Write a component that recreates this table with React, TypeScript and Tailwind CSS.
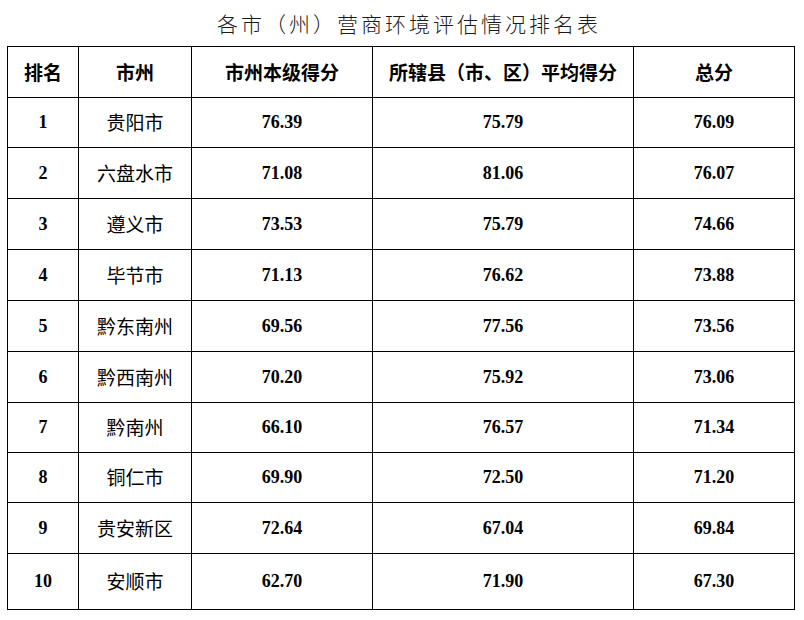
import React from "react";

const rows: { rank: string; name: string; a: string; b: string; c: string; h: string }[] = [
  { rank: "1", name: "贵阳市", a: "76.39", b: "75.79", c: "76.09", h: "h-[50px]" },
  { rank: "2", name: "六盘水市", a: "71.08", b: "81.06", c: "76.07", h: "h-[51px]" },
  { rank: "3", name: "遵义市", a: "73.53", b: "75.79", c: "74.66", h: "h-[51px]" },
  { rank: "4", name: "毕节市", a: "71.13", b: "76.62", c: "73.88", h: "h-[51px]" },
  { rank: "5", name: "黔东南州", a: "69.56", b: "77.56", c: "73.56", h: "h-[51px]" },
  { rank: "6", name: "黔西南州", a: "70.20", b: "75.92", c: "73.06", h: "h-[51px]" },
  { rank: "7", name: "黔南州", a: "66.10", b: "76.57", c: "71.34", h: "h-[50px]" },
  { rank: "8", name: "铜仁市", a: "69.90", b: "72.50", c: "71.20", h: "h-[50px]" },
  { rank: "9", name: "贵安新区", a: "72.64", b: "67.04", c: "69.84", h: "h-[51px]" },
  { rank: "10", name: "安顺市", a: "62.70", b: "71.90", c: "67.30", h: "h-[56px]" },
];

const cjk = "font-['Noto_Sans_CJK_SC',sans-serif]";
const serif = "font-['Liberation_Serif','Noto_Sans_CJK_SC',serif] text-[18px] font-bold";
const cell = "flex items-center justify-center border-r border-b border-black";

export default function App() {
  return (
    <div className="w-[804px] h-[620px] bg-white text-black">
      <div className="h-[46px] flex items-center pl-[217px]">
        <div
          className={`${cjk} text-[21px] tracking-[3px] font-light text-[#1a1a1a] leading-none`}
        >
          各市（州）营商环境评估情况排名表
        </div>
      </div>
      <div className="ml-[7px] w-[788px] border-l border-t border-black grid grid-cols-[71px_113px_181px_261px_161px]">
        {["排名", "市州", "市州本级得分", "所辖县（市、区）平均得分", "总分"].map((h) => (
          <div key={h} className={`${cell} ${cjk} h-[51px] text-[19px] font-bold`}>
            {h}
          </div>
        ))}
        {rows.map((r) => (
          <React.Fragment key={r.rank}>
            <div className={`${cell} ${serif} ${r.h}`}>{r.rank}</div>
            <div className={`${cell} ${cjk} text-[19px] ${r.h}`}>{r.name}</div>
            <div className={`${cell} ${serif} ${r.h}`}>{r.a}</div>
            <div className={`${cell} ${serif} ${r.h}`}>{r.b}</div>
            <div className={`${cell} ${serif} ${r.h}`}>{r.c}</div>
          </React.Fragment>
        ))}
      </div>
    </div>
  );
}
